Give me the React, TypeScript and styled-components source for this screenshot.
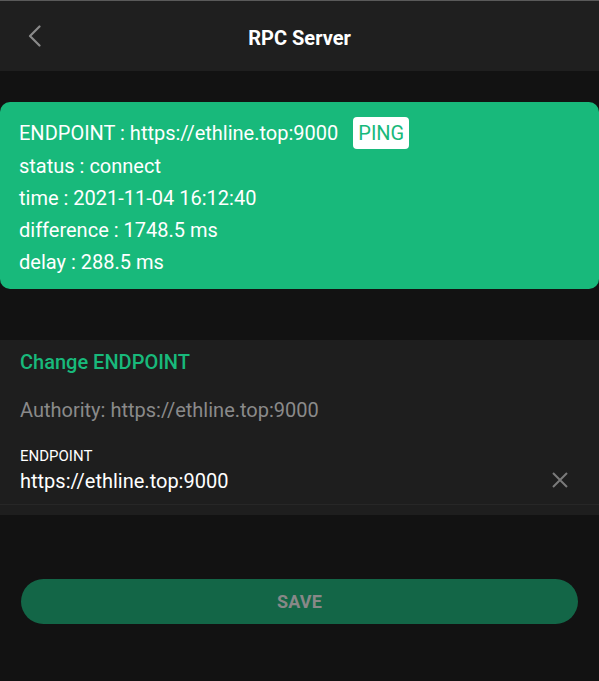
import React from "react";
import styled, { createGlobalStyle } from "styled-components";

const Global = createGlobalStyle`
  html, body { margin: 0; padding: 0; background: #121212; }
  body { font-family: Roboto, "Liberation Sans", Arial, sans-serif; }
  * { box-sizing: border-box; }
`;

const Page = styled.div`
  width: 599px;
  min-height: 681px;
  background: #121212;
  border-top: 1px solid #5a5a5a;
`;

const Header = styled.header`
  height: 70px;
  background: #1f1f1f;
  display: grid;
  grid-template-columns: 70px 1fr 70px;
  align-items: center;
  padding-top: 3px;
`;

const BackButton = styled.button`
  background: none;
  border: 0;
  padding: 0 0 0 28px;
  height: 40px;
  display: flex;
  align-items: center;
  cursor: pointer;
  margin-top: -3px;
`;

const Title = styled.h1`
  margin: 0;
  text-align: center;
  font-size: 20px;
  font-weight: 700;
  color: #ffffff;
`;

const StatusCard = styled.section`
  margin-top: 31px;
  background: #18b97b;
  border-radius: 10px;
  padding: 14px 19px 11px;
  display: flex;
  flex-direction: column;
`;

const InfoLine = styled.div<{ $tall?: boolean }>`
  display: flex;
  align-items: center;
  gap: 15px;
  height: ${(p) => (p.$tall ? "34px" : "32px")};
  font-size: 20px;
  color: #ffffff;
`;

const PingBadge = styled.span`
  background: #ffffff;
  color: #18b97b;
  border-radius: 4px;
  height: 32px;
  padding: 0 5px;
  display: inline-flex;
  align-items: center;
  font-size: 20px;
`;

const EditSection = styled.section`
  margin-top: 51px;
  background: #1e1e1e;
  padding: 10px 0 10px;
`;

const SectionTitle = styled.h2`
  margin: 0;
  padding: 0 20px;
  font-size: 20px;
  font-weight: 500;
  color: #18b97b;
  line-height: 24px;
`;

const Authority = styled.div`
  padding: 0 20px;
  margin-top: 24px;
  font-size: 20px;
  color: #8a8a8a;
  line-height: 24px;
`;

const Field = styled.div`
  margin-top: 26px;
  padding: 0 20px 10px;
  border-bottom: 1px solid #272727;
  display: flex;
  align-items: flex-end;
  justify-content: space-between;
`;

const FieldBody = styled.div`
  display: flex;
  flex-direction: column;
`;

const FieldLabel = styled.label`
  font-size: 15px;
  color: #ffffff;
  line-height: 16px;
`;

const FieldValue = styled.div`
  font-size: 20px;
  color: #ffffff;
  line-height: 26px;
  margin-top: 4px;
`;

const ClearButton = styled.button`
  background: none;
  border: 0;
  padding: 0;
  margin-right: 10px;
  margin-bottom: 5px;
  display: flex;
  cursor: pointer;
`;

const Footer = styled.div`
  padding: 64px 21px 0;
`;

const SaveButton = styled.button`
  width: 100%;
  height: 45px;
  border: 0;
  border-radius: 23px;
  background: #136647;
  color: #888888;
  font-family: Roboto, "Liberation Sans", Arial, sans-serif;
  font-size: 18px;
  font-weight: 700;
  letter-spacing: 0.2px;
`;

export default function App() {
  return (
    <>
      <Global />
      <Page>
        <Header>
          <BackButton aria-label="back">
            <svg width="14" height="22" viewBox="0 0 14 22" fill="none">
              <path d="M11.5 1.5 L2 11 L11.5 20.5" stroke="#8a8a8a" strokeWidth="2.2" strokeLinecap="round" strokeLinejoin="round" />
            </svg>
          </BackButton>
          <Title>RPC Server</Title>
          <div />
        </Header>
        <StatusCard>
          <InfoLine $tall>
            <span>ENDPOINT : https://ethline.top:9000</span>
            <PingBadge>PING</PingBadge>
          </InfoLine>
          <InfoLine>status : connect</InfoLine>
          <InfoLine>time : 2021-11-04 16:12:40</InfoLine>
          <InfoLine>difference : 1748.5 ms</InfoLine>
          <InfoLine>delay : 288.5 ms</InfoLine>
        </StatusCard>
        <EditSection>
          <SectionTitle>Change ENDPOINT</SectionTitle>
          <Authority>Authority: https://ethline.top:9000</Authority>
          <Field>
            <FieldBody>
              <FieldLabel>ENDPOINT</FieldLabel>
              <FieldValue>https://ethline.top:9000</FieldValue>
            </FieldBody>
            <ClearButton aria-label="clear">
              <svg width="18" height="18" viewBox="0 0 18 18">
                <path d="M2 2 L16 16 M16 2 L2 16" stroke="#7a7a7a" strokeWidth="2" />
              </svg>
            </ClearButton>
          </Field>
        </EditSection>
        <Footer>
          <SaveButton>SAVE</SaveButton>
        </Footer>
      </Page>
    </>
  );
}
